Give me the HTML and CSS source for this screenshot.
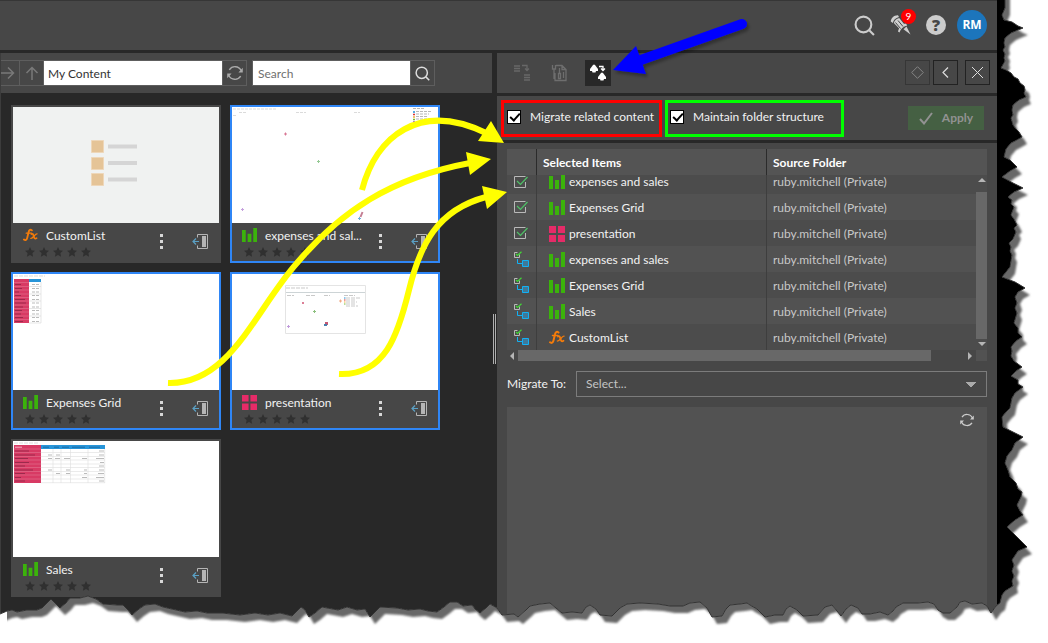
FILE: index.html
```html
<!DOCTYPE html>
<html lang="en">
<head>
<meta charset="utf-8">
<title>Content Manager</title>
<link rel="stylesheet" href="styles.css">
</head>
<body>
<svg class="defs" width="0" height="0" aria-hidden="true">
  <symbol id="bars" viewBox="0 0 16 16"><path fill="#3bb30b" d="M0 2h4v13H0zM6 6h4v9H6zM12 0h4v15h-4z"/></symbol>
  <symbol id="tiles" viewBox="0 0 16 16"><path fill="#e62b68" d="M0 0h7v7H0zM9 0h7v7H9zM0 9h7v7H0zM9 9h7v7H9z"/></symbol>
  <symbol id="fx" viewBox="0 0 16 16"><g fill="none" stroke="#f57c0a" stroke-linecap="round"><path stroke-width="2" d="M9.5 2.5C7.5.8 6.3 2.5 5.8 5L4.5 10.5C4 12.800 2.500 13.500 1 12.300"/><path stroke-width="1.500" d="M3.500 5.500H9"/><path stroke-width="1.800" d="M9 6.500c2-1 2 1 2.500 2.500.5 1.800 1 3 3 1.800"/><path stroke-width="1.300" d="M15 6.200c-2-.5-4.500 5.500-6.700 4.800"/></g></symbol>
  <symbol id="stars" viewBox="0 0 66 10"><g fill="#303030"><path id="st" d="M5 0l1.500 3.300 3.500.4-2.600 2.400.7 3.600L5 7.900 1.900 9.700l.7-3.600L0 3.700l3.500-.4z"/><use href="#st" x="14"/><use href="#st" x="28"/><use href="#st" x="42"/><use href="#st" x="56"/></g></symbol>
  <symbol id="dots" viewBox="0 0 3 15"><path fill="#d8d8d8" d="M0 0h3v3H0zM0 6h3v3H0zM0 12h3v3H0z"/></symbol>
  <symbol id="exit" viewBox="0 0 16 15"><path fill="none" stroke="#b5b5b5" d="M5.500 3.500V.5h10v14h-10v-3"/><path fill="#b5b5b5" d="M10 2h4v11h-4z"/><path fill="none" stroke="#5aa0c4" stroke-width="1.200" d="M7 7.500H1M4 4.500l-3 3 3 3"/></symbol>
  <symbol id="sync" viewBox="0 0 14 14"><g fill="none" stroke="currentColor" stroke-width="1.200"><path d="M2 4.200a6 6 0 0 1 10.400.6M12 9.800A6 6 0 0 1 1.600 9.200"/></g><path fill="currentColor" d="M13.800 2.500v4H10zM.2 11.500v-4H4z"/></symbol>
  <symbol id="loupe" viewBox="0 0 20 20"><circle cx="9" cy="9" r="7.500" fill="none" stroke="currentColor" stroke-width="2"/><path stroke="currentColor" stroke-width="2" d="M14.500 14.500l4.500 4.500"/></symbol>
  <symbol id="picked" viewBox="0 0 16 14"><path fill="none" stroke="#b9b9b9" d="M11.500 7v5.500h-11v-11h11"/><path fill="none" stroke="#4fc267" stroke-width="1.200" d="M3 6l3.500 3.500L13.500 2"/></symbol>
  <symbol id="related" viewBox="0 0 16 16"><path fill="none" stroke="#b9b9b9" d="M5.500 3.500v3h-5v-5h3"/><path fill="none" stroke="#41d936" stroke-width="1.200" d="M2 3l1.500 1.500L7.500.7"/><path fill="none" stroke="#12b1f5" d="M3.500 8v4.500H8"/><path fill="#3f7899" stroke="#12b1f5" d="M8.500 9.500h6v6h-6z"/></symbol>
</svg>

<div class="app">
  <header class="topbar">
    <button class="plain" aria-label="Search"><svg width="21" height="21"><use href="#loupe"/></svg></button>
    <button class="plain alerts" aria-label="Notifications">
      <svg width="22" height="22" viewBox="0 0 22 22"><g fill="#cfcfcf"><path d="M.8 7.500C1 4 4 1 8 1.200L9 3C5.500 4 3.500 6 2.800 9zM3.800 9C4.500 6.500 6.500 4.500 9.200 4l5.300 6.500-4.800 4.500zM8 17.500c1-4.500 4-7.500 8-8l1.200 2c-4 1-6.500 3.500-7.700 7z"/><path d="M13.500 15.200l3-2.700 4 8z"/></g><path fill="none" stroke="#474747" d="M5.500 8.500l5 6M8 6.500l5 6"/></svg>
      <span class="badge">9</span>
    </button>
    <button class="plain help" aria-label="Help">?</button>
    <button class="avatar">RM</button>
  </header>

  <main class="workspace">
    <section class="library">
      <div class="pathbar">
        <button class="tool fwd" aria-label="Forward"><svg width="14" height="14" viewBox="0 0 14 14"><path fill="none" stroke="#797979" stroke-width="1.500" d="M0 7h12M7 1.500L12.500 7 7 12.500"/></svg></button>
        <button class="tool up" aria-label="Up"><svg width="14" height="14" viewBox="0 0 14 14"><path fill="none" stroke="#797979" stroke-width="1.500" d="M7 14V1.500M1.500 7L7 1.500 12.500 7"/></svg></button>
        <input class="path" type="text" value="My Content" aria-label="Path">
        <button class="tool" aria-label="Refresh"><svg width="16" height="16"><use href="#sync"/></svg></button>
        <input class="query" type="text" placeholder="Search" aria-label="Search content">
        <button class="tool light" aria-label="Find"><svg width="15" height="15"><use href="#loupe"/></svg></button>
      </div>
      <div class="cards">
        <article class="card">
          <svg class="thumb pale" viewBox="0 0 206 116"><g fill="#e5c497" stroke="#eed7b9"><path d="M78.500 33.500h12v12h-12zM78.500 50.500h12v12h-12zM78.500 66.500h12v12h-12z"/></g><path stroke="#d5d5d5" stroke-width="4" d="M95 39.500h29M95 56h29M95 72.500h29"/></svg>
          <div class="info"><svg class="kind"><use href="#fx"/></svg><div class="name"><h3>CustomList</h3></div><button class="plain" aria-label="More"><svg width="3" height="15"><use href="#dots"/></svg></button><button class="plain" aria-label="Move out"><svg width="16" height="15"><use href="#exit"/></svg></button><svg class="stars"><use href="#stars"/></svg></div>
        </article>
        <article class="card on">
          <svg class="thumb" viewBox="0 0 206 116"><g stroke="#ccc" stroke-dasharray="3 1" stroke-width=".7"><path d="M1 2h43M7 5.500h7M64 5.500h10M122 5.500h6M1 8.500h3"/><path stroke="#999" d="M181 1.500h12M184 4.500h16M184 7h13M184 9.500h11M184 12h14M184 14.500h12"/></g><path stroke="#1c8fd6" stroke-width="1.500" d="M181 5h2"/><path stroke="#d33" stroke-width="1.500" d="M181 7.500h2"/><path stroke="#f3ad3c" stroke-width="1.500" d="M181 10h2"/><path stroke="#7b3" stroke-width="1.500" d="M181 12.500h2"/><path stroke="#83d" stroke-width="1.500" d="M181 15h2"/><path stroke="#d87794" d="M52 27h3M53.500 25.500v3"/><path stroke="#96c995" d="M85 54.500h3M86.500 53v3"/><path stroke="#c5a1dd" d="M9 102.500h3M10.500 101v3"/><path stroke="#c47f94" stroke-width="2" d="M130.500 105l-2 5"/><path stroke="#6ab0dc" d="M126 111.500h3M127.500 110v3"/></svg>
          <div class="info"><svg class="kind"><use href="#bars"/></svg><div class="name"><h3>expenses and sal...</h3></div><button class="plain" aria-label="More"><svg width="3" height="15"><use href="#dots"/></svg></button><button class="plain" aria-label="Move out"><svg width="16" height="15"><use href="#exit"/></svg></button><svg class="stars"><use href="#stars"/></svg></div>
        </article>
        <article class="card on">
          <svg class="thumb" viewBox="0 0 206 116"><path stroke="#ccc" stroke-width=".7" stroke-dasharray="4 1" d="M1 2h31"/><path fill="#d83a64" d="M1 5h15v44H1z"/><path fill="#2795d9" d="M16 5h12v3H16z"/><path stroke="#fff" stroke-opacity=".35" stroke-width=".5" d="M1 8.500h15M1 12.500h15M1 16h15M1 20h15M1 23.500h15M1 27h15M1 31h15M1 34.500h15M1 38h15M1 42h15M1 45.500h15"/><path stroke="#9c2a4c" d="M2 10.500h6M2 14.500h7M2 18h4M2 21.500h6M2 25.500h10M2 29h11M2 33h8M2 36.500h7M2 40h6M2 43.500h8M2 47.500h8"/><path stroke="#bbb" stroke-dasharray="3 1" d="M19 10.500h8M19 14.500h8M19 18h8M19 21.500h8M19 25.500h8M19 29h8M19 33h8M19 36.500h8M19 40h8M19 43.500h8M19 47.500h8"/><path fill="none" stroke="#ccc" stroke-width=".5" d="M28 8v41H16M16 12.500h12M16 20h12M16 27h12M16 34.500h12M16 42h12"/></svg>
          <div class="info"><svg class="kind"><use href="#bars"/></svg><div class="name"><h3>Expenses Grid</h3></div><button class="plain" aria-label="More"><svg width="3" height="15"><use href="#dots"/></svg></button><button class="plain" aria-label="Move out"><svg width="16" height="15"><use href="#exit"/></svg></button><svg class="stars"><use href="#stars"/></svg></div>
        </article>
        <article class="card on">
          <svg class="thumb" viewBox="0 0 206 116"><path fill="#fff" stroke="#e4e4e4" d="M53.500 11.500h80v48h-80z"/><path stroke="#cdd4d6" d="M54 18.500h79"/><g stroke="#bbb" stroke-dasharray="4 1" stroke-width=".8"><path d="M54 14h22M55 21.500h7M74 21.500h9M92 21.500h6M112 21.500h11M114 24h14M114 26h10M114 28h11M114 30h10M114 32h12"/></g><path stroke="#1c8fd6" d="M112 24h1.500"/><path stroke="#d33" d="M112 26h1.500"/><path stroke="#f3ad3c" d="M112 28h1.500"/><path stroke="#7b3" d="M112 30h1.500"/><path fill="#dc7e96" d="M70 28h2v2h-2z"/><path stroke="#8cc07e" d="M81 37.500h3M82.500 36v3"/><path stroke="#f1a983" d="M107 27h3M108.500 25.500v3"/><path stroke="#c19bdb" d="M55 52.500h3M56.500 51v3"/><path fill="#c55772" d="M93 48h3v3h-3z"/><path fill="#477dac" d="M92 50h3v2h-3z"/></svg>
          <div class="info"><svg class="kind"><use href="#tiles"/></svg><div class="name"><h3>presentation</h3></div><button class="plain" aria-label="More"><svg width="3" height="15"><use href="#dots"/></svg></button><button class="plain" aria-label="Move out"><svg width="16" height="15"><use href="#exit"/></svg></button><svg class="stars"><use href="#stars"/></svg></div>
        </article>
        <article class="card">
          <svg class="thumb" viewBox="0 0 206 116"><path stroke="#ccc" stroke-width=".7" stroke-dasharray="4 1" d="M1 2h24"/><path fill="#d83a64" d="M1 4h27v38H1z"/><path fill="#2795d9" d="M28 4h64v4H28z"/><path stroke="#ddd" stroke-width=".6" fill="none" d="M28 11.500h64M28 15.500h64M28 19h64M28 23h64M28 26.500h64M28 30.500h64M28 34h64M28 38h64M28 41.700h64M40 8v34M48 8v34M57.500 8v34M75 8v34M91.700 8v34"/><path stroke="#fff" stroke-opacity=".35" stroke-width=".5" d="M1 8h27M1 11.500h27M1 15.500h27M1 19h27M1 23h27M1 26.500h27M1 30.500h27M1 34h27M1 38h27"/><path stroke="#f3b3c3" d="M2 6.200h7"/><path stroke="#9c2a4c" d="M2 10h14M2 14h20M2 17.500h13M2 21.500h14M2 25h10M2 29h18M2 32.500h10M2 36.500h6M2 40h10"/><path stroke="#1b6ba5" d="M30 6.200h6M41 6.200h5M49 6.200h7M59 6.200h13M76 6.200h11"/><path stroke="#bbb" d="M86 10h5M35 14h4M43 14h4M86 14h5M35 17.500h4M42 17.500h5M51 17.500h6M69 17.500h5M83 17.500h8M87 21.500h4M86 25h5M35 29h4M53 29h4M71 29h3M86 29h5M43 32.500h4M53 32.500h4M71 32.500h3M85 32.500h6M69 36.500h5M83 36.500h8M86 40h5"/></svg>
          <div class="info"><svg class="kind"><use href="#bars"/></svg><div class="name"><h3>Sales</h3></div><button class="plain" aria-label="More"><svg width="3" height="15"><use href="#dots"/></svg></button><button class="plain" aria-label="Move out"><svg width="16" height="15"><use href="#exit"/></svg></button><svg class="stars"><use href="#stars"/></svg></div>
        </article>
      </div>
    </section>
    <div class="splitter" role="separator"></div>

    <section class="migrate">
      <div class="modes">
        <button class="mode" aria-label="Data"><svg width="18" height="18" viewBox="0 0 18 18"><path stroke="#686868" stroke-width="1.500" fill="none" d="M1 2h6M1 4.500h6M1 7h6M11 11h6M11 13.500h6M11 16h6"/><path fill="none" stroke="#686868" stroke-width="1.300" d="M9 1.500h5v5M12 4.500l2 2 2-2"/></svg></button>
        <button class="mode" aria-label="Settings"><svg width="18" height="18" viewBox="0 0 18 18"><path fill="none" stroke="#6e6e6e" stroke-width="1.300" d="M5 1.500h6l4 4V16.500H4V9M11 1.500v4h4M1.500 1v4h3V1M3 5v10M8.500 9V4M7.500 9.500h2v5h-2zM12.500 14V8"/></svg></button>
        <button class="mode active" aria-label="Content"><svg width="18" height="18" viewBox="0 0 18 18"><path fill="#fff" d="M5 .5L6 1l3 4v2H7L6.500 8.500h-3L3 7H1V5l3-4zM13 8.500l1 .5 3 4v2h-2l-.5 1.500h-3L11 15H9v-2l3-4z"/><path fill="none" stroke="#fff" stroke-width="1.300" d="M10 2.500h4v4M12 4.500l2 2 2-2"/></svg></button>
        <span class="grow"></span>
        <button class="square dim" aria-label="Mark"><svg width="13" height="13" viewBox="0 0 13 13"><path fill="none" stroke="#858585" d="M6.500.7l5.800 5.800-5.800 5.800L.7 6.500z"/></svg></button>
        <button class="square" aria-label="Back"><svg width="13" height="13" viewBox="0 0 13 13"><path fill="none" stroke="#ddd" stroke-width="1.200" d="M9 1.500L4 6.500l5 5"/></svg></button>
        <button class="square close" aria-label="Close"><svg width="13" height="13" viewBox="0 0 13 13"><path stroke="#ddd" d="M1 1l11 11M12 1L1 12"/></svg></button>
      </div>
      <div class="options">
        <label class="opt red"><input type="checkbox" checked>Migrate related content</label>
        <label class="opt green"><input type="checkbox" checked>Maintain folder structure</label>
        <span class="grow"></span>
        <button class="apply"><svg width="14" height="13" viewBox="0 0 14 13"><path fill="none" stroke="#929292" stroke-width="2" d="M1 7l4 4.500L13 1"/></svg>Apply</button>
      </div>
      <div class="body">
        <div class="grid">
          <table>
            <thead><tr><th aria-label="State"></th><th>Selected Items</th><th>Source Folder</th></tr></thead>
            <tbody>
              <tr><td><svg width="16" height="14"><use href="#picked"/></svg></td><td><svg width="16" height="16"><use href="#bars"/></svg>expenses and sales</td><td>ruby.mitchell (Private)</td></tr>
              <tr><td><svg width="16" height="14"><use href="#picked"/></svg></td><td><svg width="16" height="16"><use href="#bars"/></svg>Expenses Grid</td><td>ruby.mitchell (Private)</td></tr>
              <tr><td><svg width="16" height="14"><use href="#picked"/></svg></td><td><svg width="16" height="16"><use href="#tiles"/></svg>presentation</td><td>ruby.mitchell (Private)</td></tr>
              <tr><td><svg width="16" height="16"><use href="#related"/></svg></td><td><svg width="16" height="16"><use href="#bars"/></svg>expenses and sales</td><td>ruby.mitchell (Private)</td></tr>
              <tr><td><svg width="16" height="16"><use href="#related"/></svg></td><td><svg width="16" height="16"><use href="#bars"/></svg>Expenses Grid</td><td>ruby.mitchell (Private)</td></tr>
              <tr><td><svg width="16" height="16"><use href="#related"/></svg></td><td><svg width="16" height="16"><use href="#bars"/></svg>Sales</td><td>ruby.mitchell (Private)</td></tr>
              <tr><td><svg width="16" height="16"><use href="#related"/></svg></td><td><svg width="16" height="16"><use href="#fx"/></svg>CustomList</td><td>ruby.mitchell (Private)</td></tr>
            </tbody>
          </table>
          <div class="vbar"><i class="arrow u"></i><i class="knob"></i><i class="arrow d"></i></div>
          <div class="hbar"><i class="arrow l"></i><i class="knob"></i><i class="arrow r"></i><i class="corner"></i></div>
        </div>
        <div class="target">
          <label for="target">Migrate To:</label>
          <select id="target"><option>Select...</option></select>
        </div>
        <div class="tree"><button class="plain" aria-label="Refresh folders"><svg width="14" height="14"><use href="#sync"/></svg></button></div>
      </div>
    </section>
  </main>

  <svg class="marks" viewBox="0 0 1048 643" aria-hidden="true">
    <defs>
      <path id="sheet" d="M-20-20H1005V8L1002 15 1004 20 1012 22 1018 26 1023 28 1018 30 1011 33 1005 38 1004 43 1005 47 1003 50 1005 54 1004 58 1005 61 1001 68 1006 70 1011 73 1014 77 1018 79 1020 83 1024 86 1025 90 1024 93 1026 97 1019 100 1013 105 1012 110 1013 115 1011 118 1013 125 1016 129 1019 132 1022 137 1015 141 1011 143 1006 149 1004 157 1010 160 1017 167 1010 171 1002 177 1013 183 1023 188 1014 192 1008 197 1012 200 1011 204 1014 207 1011 215 1014 219 1017 225 1014 228 1016 232 1013 239 1009 243 1011 247 1010 251 1012 255 1010 267 1006 272 1002 277 1015 282 1025 288 1018 292 1015 297 1017 303 1015 308 1017 313 1014 323 1018 328 1018 333 1022 337 1016 341 1011 347 1012 351 1011 356 1014 361 1022 367 1016 371 1011 376 1018 380 1018 384 1023 387 1015 393 1012 398 1010 408 1006 412 1002 417 1003 427 1011 431 1023 437 1015 443 1012 450 1007 456 1005 463 1008 470 1010 477 1016 483 1018 489 1022 492 1021 497 1017 505 1020 511 1023 515 1015 520 1007 527 1017 537 1027 547 1018 551 1012 560 1014 565 1012 571 1014 576 1012 581 1013 586 1005 591 1002 595 1000 603 996 606 991 613 987 606 982 603 972 604 965 601 960 602 957 607 950 613 943 613 938 610 934 604 928 602 918 603 903 603 896 607 893 611 888 615 880 612 870 614 862 614 858 608 851 605 846 609 841 616 837 611 832 605 825 607 818 615 803 616 797 610 790 606 786 609 783 615 775 615 765 617 757 609 750 605 747 603 740 604 730 605 726 609 722 616 712 617 707 608 700 602 690 603 683 606 670 606 658 604 640 603 627 604 620 608 612 616 600 615 596 609 590 605 586 607 582 613 572 612 562 613 556 608 550 603 540 604 530 606 526 610 518 617 514 614 502 615 497 608 490 604 486 608 480 613 475 609 472 605 463 606 457 602 450 602 444 607 437 612 428 611 420 609 408 610 397 608 380 607 375 612 370 617 365 609 357 610 347 607 338 610 322 607 315 613 309 617 305 610 301 607 297 611 292 616 280 613 268 615 255 613 240 615 222 613 207 613 197 611 185 612 163 607 155 604 145 605 139 609 132 615 128 610 123 605 117 605 103 604 96 599 88 596 80 598 70 598 66 603 60 608 56 604 51 599 46 604 42 608 37 610 27 610 17 612 12 610 7 611 0 614H-20z"/>
      <clipPath id="beyond"><path clip-rule="evenodd" d="M-30-30H1080V680H-30zM-20-20H1005V8L1002 15 1004 20 1012 22 1018 26 1023 28 1018 30 1011 33 1005 38 1004 43 1005 47 1003 50 1005 54 1004 58 1005 61 1001 68 1006 70 1011 73 1014 77 1018 79 1020 83 1024 86 1025 90 1024 93 1026 97 1019 100 1013 105 1012 110 1013 115 1011 118 1013 125 1016 129 1019 132 1022 137 1015 141 1011 143 1006 149 1004 157 1010 160 1017 167 1010 171 1002 177 1013 183 1023 188 1014 192 1008 197 1012 200 1011 204 1014 207 1011 215 1014 219 1017 225 1014 228 1016 232 1013 239 1009 243 1011 247 1010 251 1012 255 1010 267 1006 272 1002 277 1015 282 1025 288 1018 292 1015 297 1017 303 1015 308 1017 313 1014 323 1018 328 1018 333 1022 337 1016 341 1011 347 1012 351 1011 356 1014 361 1022 367 1016 371 1011 376 1018 380 1018 384 1023 387 1015 393 1012 398 1010 408 1006 412 1002 417 1003 427 1011 431 1023 437 1015 443 1012 450 1007 456 1005 463 1008 470 1010 477 1016 483 1018 489 1022 492 1021 497 1017 505 1020 511 1023 515 1015 520 1007 527 1017 537 1027 547 1018 551 1012 560 1014 565 1012 571 1014 576 1012 581 1013 586 1005 591 1002 595 1000 603 996 606 991 613 987 606 982 603 972 604 965 601 960 602 957 607 950 613 943 613 938 610 934 604 928 602 918 603 903 603 896 607 893 611 888 615 880 612 870 614 862 614 858 608 851 605 846 609 841 616 837 611 832 605 825 607 818 615 803 616 797 610 790 606 786 609 783 615 775 615 765 617 757 609 750 605 747 603 740 604 730 605 726 609 722 616 712 617 707 608 700 602 690 603 683 606 670 606 658 604 640 603 627 604 620 608 612 616 600 615 596 609 590 605 586 607 582 613 572 612 562 613 556 608 550 603 540 604 530 606 526 610 518 617 514 614 502 615 497 608 490 604 486 608 480 613 475 609 472 605 463 606 457 602 450 602 444 607 437 612 428 611 420 609 408 610 397 608 380 607 375 612 370 617 365 609 357 610 347 607 338 610 322 607 315 613 309 617 305 610 301 607 297 611 292 616 280 613 268 615 255 613 240 615 222 613 207 613 197 611 185 612 163 607 155 604 145 605 139 609 132 615 128 610 123 605 117 605 103 604 96 599 88 596 80 598 70 598 66 603 60 608 56 604 51 599 46 604 42 608 37 610 27 610 17 612 12 610 7 611 0 614H-20z"/></clipPath>
      <filter id="soft" x="-5%" y="-5%" width="110%" height="110%"><feGaussianBlur stdDeviation="1.200"/></filter>
      <filter id="cast" x="-20%" y="-20%" width="150%" height="150%"><feDropShadow dx="2" dy="3" stdDeviation="1.500" flood-opacity=".3"/></filter>
    </defs>
    <g clip-path="url(#beyond)">
      <path fill="#fff" d="M0 0H1048V643H0z"/>
      <use href="#sheet" x="5" y="7" fill="#686868" filter="url(#soft)"/>
      <path fill="#fff" d="M0 605H7V643H0z"/>
    </g>
    <use href="#sheet" fill="none" stroke="#333"/>
    <g fill="none" stroke="#ff0" stroke-width="6">
      <path d="M362 190C376 136 420 101 486 133"/>
      <path d="M168 383C230 385 255 310 297 263C340 212 390 178 470 163"/>
      <path d="M339 374C385 376 398 335 409 290C420 245 437 210 486 197"/>
    </g>
    <path fill="#ff0" d="M491 121L504 143 478 141zM466 152L491 159 470 175zM482 186L507 192 487 209z"/>
    <g filter="url(#cast)"><path stroke="#00f" stroke-width="10" stroke-linecap="round" d="M742 24L638 61"/><path fill="#00f" d="M613 70L636 46 646 74z"/></g>
  </svg>
</div>
</body>
</html>
```

FILE: styles.css
```css
* { box-sizing: border-box; }

body {
  margin: 0;
  background: #fff;
  color: #f2f2f2;
  font: 12px/16px Lato, "Open Sans", sans-serif;
  overflow: hidden;
}

button, input, select { font: inherit; color: inherit; margin: 0; }
button { padding: 0; border: 0; background: none; display: flex; align-items: center; justify-content: center; }
svg { display: block; flex: none; }
h3 { margin: 0; font: inherit; }
.defs { position: absolute; }
.grow { flex: 1; }

.app {
  position: relative;
  display: flex;
  flex-direction: column;
  min-height: 100vh;
  padding-right: 51px;
  background: #000;
}

.marks { position: absolute; top: 0; left: 0; width: 100%; pointer-events: none; }

.topbar {
  display: flex;
  align-items: center;
  justify-content: flex-end;
  gap: 11px;
  height: 50px;
  padding: 0 10px 1px 0;
  background: #474747;
  border-top: 1px solid #363636;
  color: #ccc;
}

.alerts { position: relative; margin-left: 4px; }
.badge {
  position: absolute;
  top: -5px;
  right: -4px;
  width: 15px;
  height: 15px;
  border-radius: 8px;
  background: #f00;
  color: #fff;
  font-size: 10px;
  line-height: 15px;
}
.help {
  width: 20px;
  height: 20px;
  margin-left: 3px;
  border-radius: 50%;
  background: #ccc;
  color: #474747;
  font: 800 16px/20px "Open Sans", sans-serif;
}
.avatar {
  width: 30px;
  height: 30px;
  border-radius: 50%;
  background: #1c75bc;
  color: #fff;
  font: 700 12px/16px "Open Sans", sans-serif;
}

.workspace {
  flex: 1;
  display: grid;
  grid-template-columns: minmax(0, 1fr) 5px 500px;
  padding-top: 3px;
  background: #282828;
}

.library { border-left: 1px solid #3c3c3c; }

.pathbar {
  display: flex;
  align-items: center;
  height: 40px;
  background: #474747;
}
.tool {
  width: 25px;
  height: 26px;
  border: 1px solid #5e5e5e;
  color: #aaa;
}
.tool.fwd { width: 19px; border-left: 0; justify-content: flex-start; }
.tool.up { width: 24px; border-left: 0; }
.tool.light { color: #ddd; }
.path, .query {
  height: 26px;
  border: 1px solid #5e5e5e;
  border-width: 1px 0;
  border-radius: 0;
  background: #fff;
  color: #333;
  outline: 0;
}
.path { width: 178px; padding: 0 4px; }
.query { width: 158px; margin-left: 5px; padding: 0 5px; border-left-width: 1px; }
.query::placeholder { color: #707070; }

.cards {
  display: grid;
  grid-template-columns: repeat(auto-fill, 210px);
  gap: 9px;
  padding: 12px 10px;
}
.card { border: 2px solid #474747; background: #474747; }
.card.on { border-color: #2f86f6; }
.thumb { width: 100%; background: #fff; }
.thumb.pale { background: #f0f2f1; }
.info {
  display: grid;
  grid-template-columns: 15px 122px 3px 1fr;
  grid-template-rows: 24px 12px;
  align-items: center;
  height: 38px;
  padding: 0 11px 0 10px;
}
.kind { width: 15px; height: 15px; }
.name { padding: 1px 0 0 8px; white-space: nowrap; }
.info button { grid-row: 1 / 3; }
.info button:nth-of-type(1) { grid-column: 3; }
.info button:nth-of-type(2) { grid-column: 4; justify-content: flex-end; }
.stars { grid-column: 1 / 3; align-self: start; width: 66px; height: 10px; margin-left: 2px; }

.splitter {
  align-self: start;
  width: 3px;
  height: 50px;
  margin: 261px 0 0 1px;
  border: 1px solid #b0b0b0;
  border-width: 0 1px;
}

.migrate { display: flex; flex-direction: column; background: #282828; gap: 3px; }
.modes, .options, .body { background: #474747; }

.modes { display: flex; align-items: center; height: 40px; padding: 0 7px 1px 12px; }
.mode { width: 26px; height: 26px; margin-right: 12px; }
.mode.active { background: #282828; }
.square { width: 25px; height: 25px; margin-left: 3px; border: 1px solid #222; }
.square.dim { border-color: #363636; }
.square.close { margin-left: 7px; }

.options { display: flex; align-items: center; height: 44px; padding: 0 13px 0 4px; }
.opt {
  display: flex;
  align-items: center;
  height: 37px;
  padding: 0 4px 2px 3px;
  border: 3px solid #f00;
  white-space: nowrap;
}
.opt.red { width: 161px; }
.opt.green { width: 179px; margin-left: 3px; padding-left: 2px; border-color: #0f0; }
.opt input {
  appearance: none;
  width: 14px;
  height: 14px;
  flex: none;
  margin-right: 9px;
  border: 1px solid #000;
  background: #fff;
}
.opt input:checked::after {
  content: "";
  display: block;
  width: 4px;
  height: 8px;
  margin: 0 0 0 4px;
  border: solid #000;
  border-width: 0 2px 2px 0;
  transform: rotate(42deg);
}
.apply {
  width: 76px;
  height: 24px;
  gap: 9px;
  background: #456043;
  color: #929292;
  font-weight: 700;
}

.body { flex: 1; display: flex; flex-direction: column; padding: 6px 10px 0; }

.grid {
  display: grid;
  grid-template-columns: minmax(0, 1fr) 11px;
  background: #4c4c4c;
}
table, thead, tbody { display: block; }
table { grid-area: 1 / 1 / 2 / 3; }
tr { display: grid; grid-template-columns: 30px 230px minmax(0, 1fr); height: 26px; }
th, td {
  display: flex;
  align-items: center;
  gap: 4px;
  padding: 1px 6px 0;
  border-right: 1px solid #3e3e3e;
  white-space: nowrap;
}
th { border-color: #2b2b2b; font-weight: 700; color: #fff; }
th:last-child, td:last-child { border-right: 0; }
thead { background: #545454; }
tbody { height: 175px; overflow: hidden; }
tbody tr:nth-child(even) { background: #525252; }
td:first-child { padding: 0 7px; }
td:nth-child(2) { padding-left: 12px; }
td:last-child { color: #c8c8c8; }
tbody tr:first-child { height: 19px; line-height: 14px; }
tbody tr:first-child td { height: 19px; padding-bottom: 5px; padding-top: 0; }

.vbar {
  grid-area: 1 / 2;
  display: flex;
  flex-direction: column;
  align-items: center;
  margin-top: 26px;
  background: #4c4c4c;
  z-index: 1;
}
.vbar .knob { flex: 1; width: 11px; margin: 10px 0 3px; background: #686868; }
.hbar { grid-area: 2 / 1 / 3 / 3; display: flex; align-items: center; height: 11px; background: #474747; }
.hbar .knob { width: 413px; height: 11px; margin: 0 37px 0 4px; background: #686868; }
.corner { width: 11px; height: 11px; margin-left: auto; background: #525252; }
.arrow { flex: none; width: 0; height: 0; border: 4px solid transparent; }
.arrow.u { border-bottom-color: #b5b5b5; border-top: 0; margin-top: 3px; }
.arrow.d { border-top-color: #b5b5b5; border-bottom: 0; margin-bottom: 4px; }
.arrow.l { border-right-color: #b5b5b5; border-left: 0; margin-left: 3px; }
.arrow.r { border-left-color: #b5b5b5; border-right: 0; }

.target { display: flex; align-items: center; margin: 10px 0; }
.target label { width: 69px; }
.target select {
  flex: 1;
  height: 26px;
  padding: 0 9px;
  appearance: none;
  border: 1px solid #7c7c7c;
  border-radius: 0;
  background: linear-gradient(to bottom left, #aaa 50%, transparent 51%) no-repeat right 15px top 10px / 5px 5px,
    linear-gradient(to bottom right, #aaa 50%, transparent 51%) no-repeat right 10px top 10px / 5px 5px #474747;
  color: #c4c4c4;
}
.tree { flex: 1; display: flex; justify-content: flex-end; align-items: flex-start; padding: 6px 13px; background: #525252; }
.tree .plain { color: #ccc; }
```
